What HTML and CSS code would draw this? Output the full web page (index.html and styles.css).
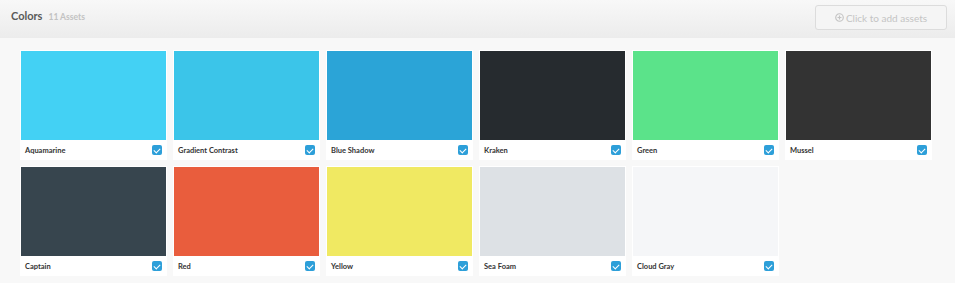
FILE: index.html
```html
<!DOCTYPE html>
<html>
<head>
<meta charset="utf-8">
<link rel="stylesheet" href="styles.css">
</head>
<body>
<header class="topbar">
  <div class="title"><span class="name">Colors</span><span class="count">11 Assets</span></div>
  <button class="add-btn"><svg class="plus" width="9" height="9" viewBox="0 0 10 10"><circle cx="5" cy="5" r="4.2" fill="none" stroke="currentColor" stroke-width="1.3"/><path d="M5 2.8V7.2M2.8 5H7.2" stroke="currentColor" stroke-width="1.3"/></svg>Click to add assets</button>
</header>
<main class="grid">
  <div class="card"><div class="swatch" style="background:#43d1f4"></div><div class="label"><span>Aquamarine</span><i class="check"></i></div></div>
  <div class="card"><div class="swatch" style="background:#3bc5e9"></div><div class="label"><span>Gradient Contrast</span><i class="check"></i></div></div>
  <div class="card"><div class="swatch" style="background:#2ba4d7"></div><div class="label"><span>Blue Shadow</span><i class="check"></i></div></div>
  <div class="card"><div class="swatch" style="background:#262b2f"></div><div class="label"><span>Kraken</span><i class="check"></i></div></div>
  <div class="card"><div class="swatch" style="background:#5be38a"></div><div class="label"><span>Green</span><i class="check"></i></div></div>
  <div class="card"><div class="swatch" style="background:#333333"></div><div class="label"><span>Mussel</span><i class="check"></i></div></div>
  <div class="card"><div class="swatch" style="background:#37454e"></div><div class="label"><span>Captain</span><i class="check"></i></div></div>
  <div class="card"><div class="swatch" style="background:#e95d3d"></div><div class="label"><span>Red</span><i class="check"></i></div></div>
  <div class="card"><div class="swatch" style="background:#f0e962"></div><div class="label"><span>Yellow</span><i class="check"></i></div></div>
  <div class="card"><div class="swatch" style="background:#dde1e5"></div><div class="label"><span>Sea Foam</span><i class="check"></i></div></div>
  <div class="card"><div class="swatch" style="background:#f5f6f8"></div><div class="label"><span>Cloud Gray</span><i class="check"></i></div></div>
</main>
</body>
</html>
```
FILE: styles.css
```css
* { box-sizing: border-box; }
html, body { margin: 0; padding: 0; }
body {
  background: #f8f8f8;
  font-family: "Lato", "Liberation Sans", sans-serif;
  width: 955px;
  height: 283px;
  overflow: hidden;
}
.topbar {
  height: 38px;
  background: linear-gradient(#f8f8f8, #ececec);
  display: flex;
  align-items: flex-start;
  justify-content: space-between;
  padding: 0 8px 0 11px;
}
.title {
  padding-top: 9px;
  display: flex;
  align-items: baseline;
  gap: 6px;
}
.name {
  font-size: 11px;
  font-weight: 700;
  color: #5a5a5a;
}
.count {
  font-size: 8.5px;
  font-weight: 700;
  color: #c2c2c2;
}
.add-btn {
  margin-top: 5px;
  width: 132px;
  height: 25px;
  border: 1px solid #dcdcdc;
  border-radius: 3px;
  background: #f5f5f5;
  color: #c4c4c4;
  font-family: "Lato", "Liberation Sans", sans-serif;
  font-size: 10px;
  display: flex;
  align-items: center;
  justify-content: center;
  gap: 2px;
  padding: 0;
}
.plus { display: block; }
.grid {
  display: grid;
  grid-template-columns: repeat(6, 147px);
  grid-auto-rows: 110px;
  column-gap: 6px;
  row-gap: 6px;
  padding: 12px 0 0 20px;
}
.card {
  background: #fff;
  padding: 1px 1px 0 1px;
  display: flex;
  flex-direction: column;
}
.swatch { height: 89px; }
.label {
  height: 20px;
  display: flex;
  align-items: center;
  justify-content: space-between;
  padding: 0 4px 0 4px;
  font-family: "Lato", "Liberation Sans", sans-serif;
  font-size: 7.5px;
  font-weight: 700;
  color: #333;
}
.check {
  width: 10px;
  height: 10px;
  border-radius: 2px;
  background: #2d9fd9;
  position: relative;
}
.check::after {
  content: "";
  position: absolute;
  left: 3px;
  top: 1.5px;
  width: 3px;
  height: 5px;
  border: solid #fff;
  border-width: 0 1.5px 1.5px 0;
  transform: rotate(45deg);
}
```
